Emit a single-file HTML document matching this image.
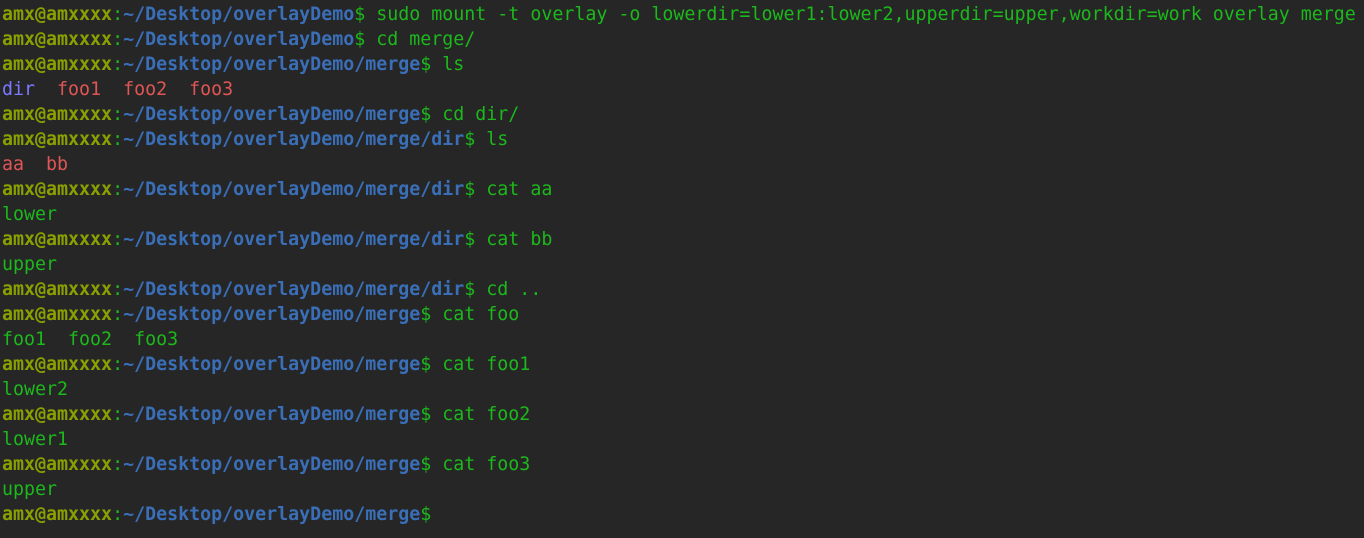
<!DOCTYPE html><html><head><style>
body{margin:0;background:#262626;width:1364px;height:538px;overflow:hidden}
pre{margin:0;padding:2px 0 0 2px;font-family:"DejaVu Sans Mono","Liberation Mono",monospace;font-size:18.3px;line-height:25px;color:#1cb81c}
.u{color:#8aa000;font-weight:bold}.c{color:#1cb81c}.p{color:#3a6fb8;font-weight:bold}.d{color:#7a7aff}.r{color:#e05555}
</style></head><body><pre><span class="u">amx@amxxxx</span>:<span class="p">~/Desktop/overlayDemo</span>$ sudo mount -t overlay -o lowerdir=lower1:lower2,upperdir=upper,workdir=work overlay merge
<span class="u">amx@amxxxx</span>:<span class="p">~/Desktop/overlayDemo</span>$ cd merge/
<span class="u">amx@amxxxx</span>:<span class="p">~/Desktop/overlayDemo/merge</span>$ ls
<span class="d">dir</span>  <span class="r">foo1</span>  <span class="r">foo2</span>  <span class="r">foo3</span>
<span class="u">amx@amxxxx</span>:<span class="p">~/Desktop/overlayDemo/merge</span>$ cd dir/
<span class="u">amx@amxxxx</span>:<span class="p">~/Desktop/overlayDemo/merge/dir</span>$ ls
<span class="r">aa</span>  <span class="r">bb</span>
<span class="u">amx@amxxxx</span>:<span class="p">~/Desktop/overlayDemo/merge/dir</span>$ cat aa
lower
<span class="u">amx@amxxxx</span>:<span class="p">~/Desktop/overlayDemo/merge/dir</span>$ cat bb
upper
<span class="u">amx@amxxxx</span>:<span class="p">~/Desktop/overlayDemo/merge/dir</span>$ cd ..
<span class="u">amx@amxxxx</span>:<span class="p">~/Desktop/overlayDemo/merge</span>$ cat foo
foo1  foo2  foo3
<span class="u">amx@amxxxx</span>:<span class="p">~/Desktop/overlayDemo/merge</span>$ cat foo1
lower2
<span class="u">amx@amxxxx</span>:<span class="p">~/Desktop/overlayDemo/merge</span>$ cat foo2
lower1
<span class="u">amx@amxxxx</span>:<span class="p">~/Desktop/overlayDemo/merge</span>$ cat foo3
upper
<span class="u">amx@amxxxx</span>:<span class="p">~/Desktop/overlayDemo/merge</span>$</pre></body></html>
